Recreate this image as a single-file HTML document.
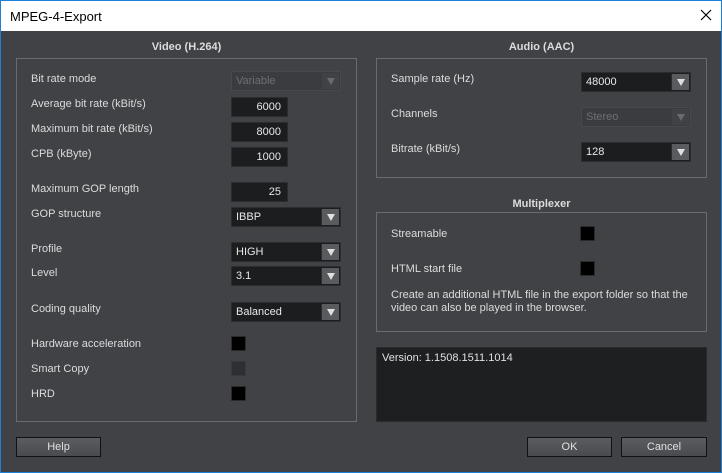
<!DOCTYPE html>
<html><head><style>
*{margin:0;padding:0;box-sizing:border-box}
body{width:722px;height:473px;overflow:hidden;background:#1c80d6;font-family:"Liberation Sans",sans-serif;font-size:11px;color:#dcdcdc;position:relative}
.a{position:absolute}
#title{left:1px;top:1px;width:720px;height:30px;background:#fff;color:#000;font-size:13px;padding:8px 0 0 9px}
#main{left:1px;top:31px;width:720px;height:441px;background:#414246}
.frame{position:absolute;border:1px solid #6a6b6e}
.h{position:absolute;font-weight:bold;text-align:center}
.l{position:absolute;white-space:nowrap}
.in{position:absolute;background:#1c1d1f;border:1px solid #2c2d2f;height:20px;width:57px;text-align:right;padding:3px 6px 0 0;color:#e8e8e8}
.dd{position:absolute;background:#1c1d1f;border:1px solid #2c2d2f;height:20px;width:110px;padding:3px 0 0 4px;color:#e8e8e8}
.dd i{position:absolute;right:1px;top:1px;width:18px;height:16px;background:#5a5b5f;border-left:1px solid #2c2d2f}
.dd i:after{content:"";position:absolute;left:5px;top:5px;border-left:4px solid transparent;border-right:4px solid transparent;border-top:7px solid #e0e0e0}
.dd.dis{background:#3b3c3f;color:#6e6f72;border-color:#48494c}
.dd.dis i{background:#414246;border-color:#3b3c3f}
.dd.dis i:after{border-top-color:#6a6b6e}
.cb{position:absolute;width:15px;height:15px;background:#000;border:1px solid #2a2a2a}
.btn{position:absolute;height:20px;border:1px solid #111;background:linear-gradient(#5c5d61,#4a4b4f);text-align:center;padding-top:3px;color:#e0e0e0}
</style></head><body>
<div class="a" id="title">MPEG-4-Export</div>
<svg class="a" style="left:700px;top:9px" width="12" height="12"><path d="M1 1L11 11M11 1L1 11" stroke="#000" stroke-width="1.2"/></svg>
<div class="a" id="main"></div>
<div class="h" style="left:16px;width:341px;top:41px">Video (H.264)</div>
<div class="frame" style="left:16px;top:58px;width:341px;height:364px"></div>
<div class="l" style="left:31px;top:73px">Bit rate mode</div>
<div class="dd dis" style="left:231px;top:71px">Variable<i></i></div>
<div class="l" style="left:31px;top:98px">Average bit rate (kBit/s)</div>
<div class="in" style="left:231px;top:97px">6000</div>
<div class="l" style="left:31px;top:123px">Maximum bit rate (kBit/s)</div>
<div class="in" style="left:231px;top:122px">8000</div>
<div class="l" style="left:31px;top:148px">CPB (kByte)</div>
<div class="in" style="left:231px;top:147px">1000</div>
<div class="l" style="left:31px;top:183px">Maximum GOP length</div>
<div class="in" style="left:231px;top:182px">25</div>
<div class="l" style="left:31px;top:208px">GOP structure</div>
<div class="dd" style="left:231px;top:207px">IBBP<i></i></div>
<div class="l" style="left:31px;top:243px">Profile</div>
<div class="dd" style="left:231px;top:242px">HIGH<i></i></div>
<div class="l" style="left:31px;top:267px">Level</div>
<div class="dd" style="left:231px;top:266px">3.1<i></i></div>
<div class="l" style="left:31px;top:303px">Coding quality</div>
<div class="dd" style="left:231px;top:302px">Balanced<i></i></div>
<div class="l" style="left:31px;top:338px">Hardware acceleration</div>
<div class="cb" style="left:231px;top:336px"></div>
<div class="l" style="left:31px;top:363px">Smart Copy</div>
<div class="cb" style="left:231px;top:361px;background:#2e2f32;border-color:#38393c"></div>
<div class="l" style="left:31px;top:388px">HRD</div>
<div class="cb" style="left:231px;top:386px"></div>

<div class="h" style="left:376px;width:331px;top:41px">Audio (AAC)</div>
<div class="frame" style="left:376px;top:58px;width:331px;height:120px"></div>
<div class="l" style="left:391px;top:73px">Sample rate (Hz)</div>
<div class="dd" style="left:581px;top:72px">48000<i></i></div>
<div class="l" style="left:391px;top:108px">Channels</div>
<div class="dd dis" style="left:581px;top:107px">Stereo<i></i></div>
<div class="l" style="left:391px;top:143px">Bitrate (kBit/s)</div>
<div class="dd" style="left:581px;top:142px">128<i></i></div>

<div class="h" style="left:376px;width:331px;top:198px">Multiplexer</div>
<div class="frame" style="left:376px;top:212px;width:331px;height:120px"></div>
<div class="l" style="left:391px;top:228px">Streamable</div>
<div class="cb" style="left:580px;top:226px"></div>
<div class="l" style="left:391px;top:263px">HTML start file</div>
<div class="cb" style="left:580px;top:261px"></div>
<div class="l" style="left:391px;top:289px;line-height:13px">Create an additional HTML file in the export folder so that the<br>video can also be played in the browser.</div>

<div class="a" style="left:376px;top:347px;width:331px;height:75px;background:#1e1f21;border:1px solid #2a2b2d;padding:4px 0 0 5px;color:#e0e0e0">Version: 1.1508.1511.1014</div>

<div class="btn" style="left:16px;top:437px;width:85px">Help</div>
<div class="btn" style="left:527px;top:437px;width:85px">OK</div>
<div class="btn" style="left:621px;top:437px;width:86px">Cancel</div>
</body></html>
